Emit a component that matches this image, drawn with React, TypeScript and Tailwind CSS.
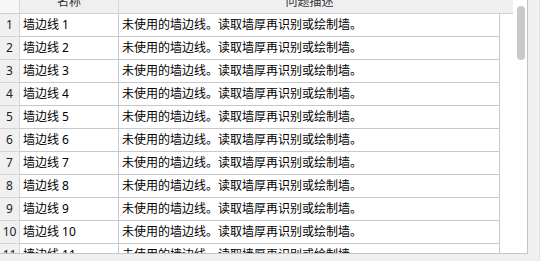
import React from 'react';

const rows = Array.from({ length: 11 }, (_, i) => ({
  id: i + 1,
  name: `墙边线 ${i + 1}`,
  desc: '未使用的墙边线。读取墙厚再识别或绘制墙。',
}));

function App() {
  return (
    <div
      className="w-[540px] h-[261px] bg-[#f0f0f0] overflow-hidden text-[12px] text-black"
      style={{ fontFamily: '"Noto Sans", "Noto Sans CJK SC", sans-serif' }}
    >
      <div className="flex h-[261px]">
        {/* table box */}
        <div className="w-[528px] h-[254px] flex border-r border-b border-[#c4c4c8] bg-white">
          <div className="w-[513px] h-[253px] overflow-hidden">
            {/* header */}
            <div className="flex h-[14px] bg-[#efefef] border-b border-[#d0d0d4]">
              <div className="w-[20px] shrink-0 bg-[#f7f7f7] border-r border-[#d8d8dc]" />
              <div className="w-[99px] shrink-0 border-r border-[#d8d8dc] overflow-hidden text-center text-[#333]">
                <div className="h-[22px] leading-[22px] -mt-[9px]">名称</div>
              </div>
              <div className="w-[381px] shrink-0 overflow-hidden text-center text-[#333]">
                <div className="h-[22px] leading-[22px] -mt-[9px]">问题描述</div>
              </div>
            </div>
            {/* rows */}
            {rows.map((r) => (
              <div key={r.id} className="flex h-[23px]">
                <div className="w-[20px] shrink-0 bg-[#f0f0f0] border-r border-b border-[#d4d4d8] text-center leading-[22px] text-[#222]">
                  {r.id}
                </div>
                <div className="w-[99px] shrink-0 border-r border-b border-[#c8c8cc] pl-[3px] leading-[22px] whitespace-nowrap">
                  {r.name}
                </div>
                <div className="w-[381px] shrink-0 border-r border-b border-[#c8c8cc] pl-[3px] leading-[22px] whitespace-nowrap">
                  {r.desc}
                </div>
              </div>
            ))}
          </div>
          {/* scrollbar */}
          <div className="w-[14px] h-[253px] bg-white pt-[6px] pl-[4px]">
            <div className="w-[8px] h-[54px] rounded-full bg-[#c9c9c9]" />
          </div>
        </div>
        <div className="flex-1 border-r border-[#e4e4e8]" />
      </div>
    </div>
  );
}

export default App;
